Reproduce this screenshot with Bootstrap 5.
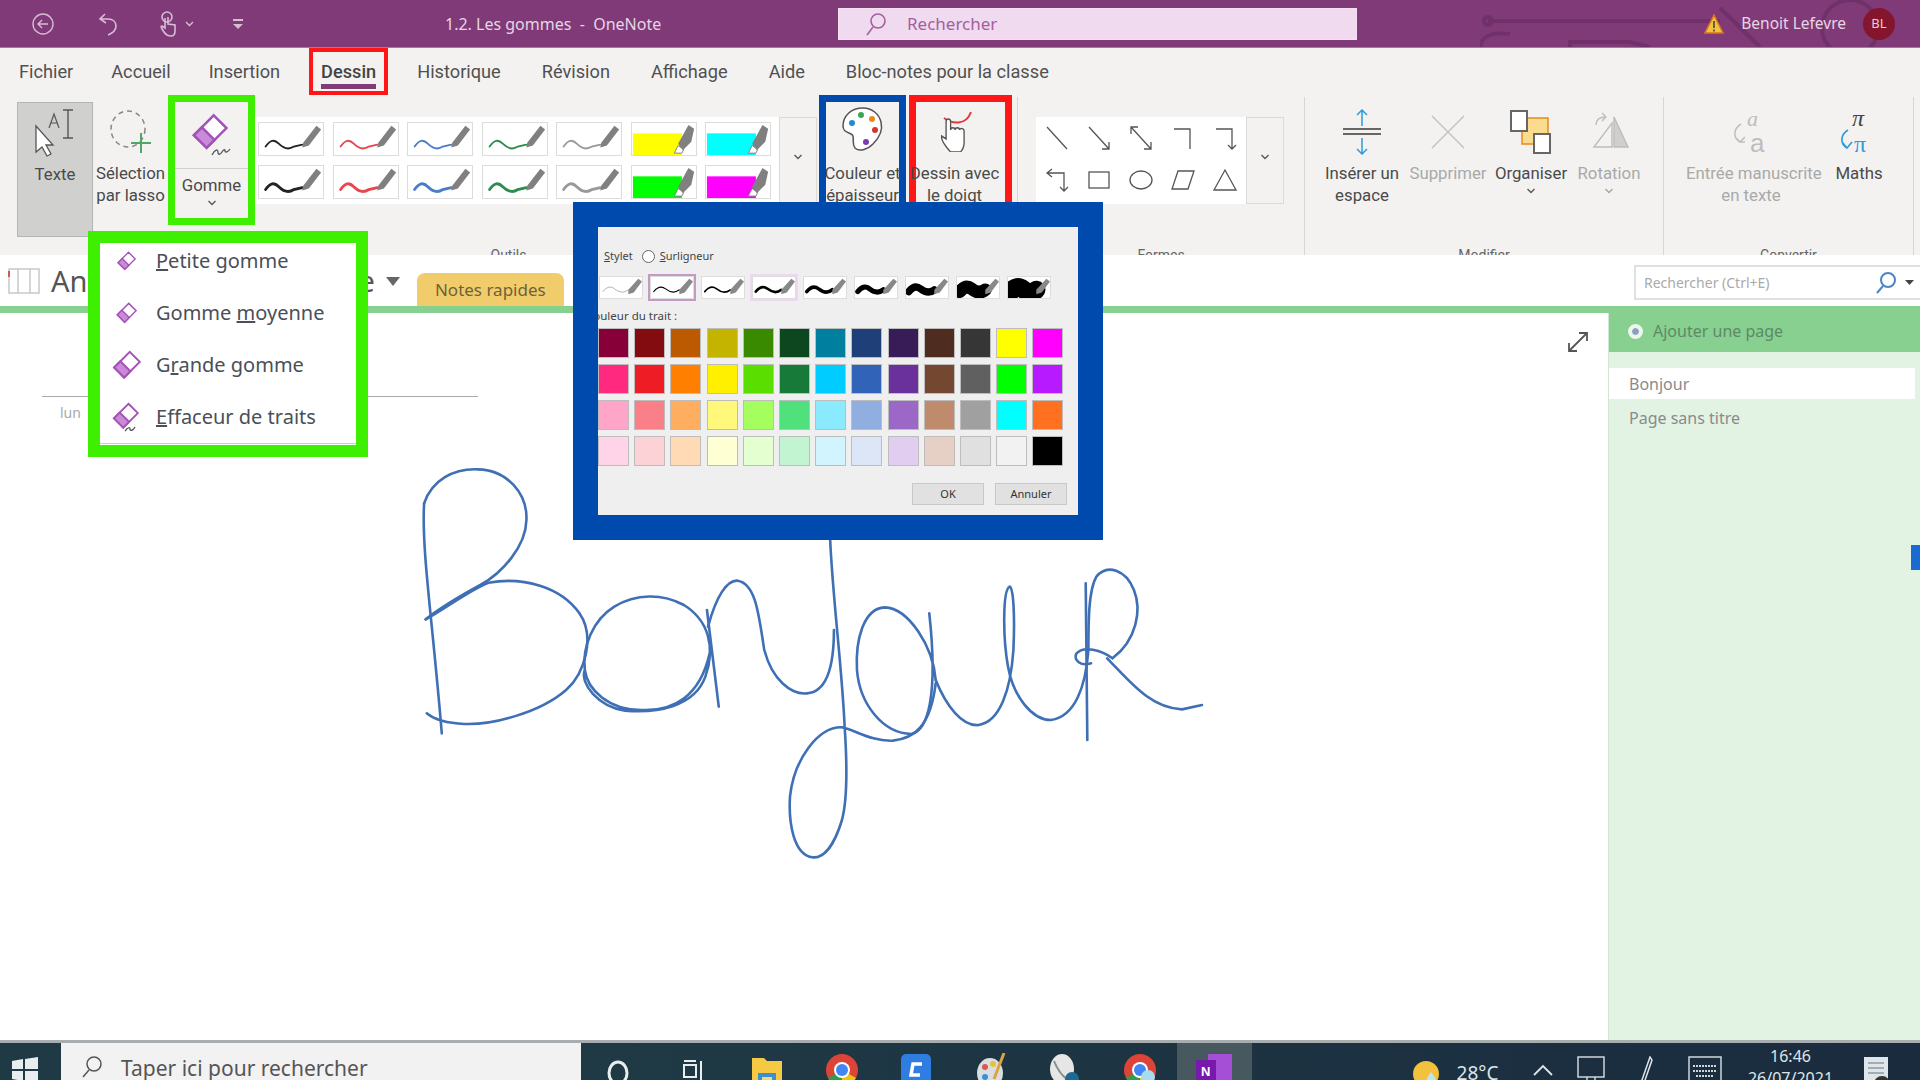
<!DOCTYPE html>
<html lang="fr">
<head>
    <meta charset="UTF-8">
    <title>1.2. Les gommes - OneNote</title>
    <link rel="stylesheet" href="https://cdn.jsdelivr.net/npm/bootstrap@5.3.0/dist/css/bootstrap.min.css">
    <style>
        body { margin: 0; background: #fff; overflow: hidden; font-family: "Noto Sans", "Liberation Sans", sans-serif; color: #444; }
        .ecran { width: 1920px; height: 1080px; position: relative; overflow: hidden; }

        /* barre de titre */
        .titre { height: 48px; background: #803a78; color: #e6d6e4; position: relative; border-bottom: 1px solid #a877a3; }
        .titre-deco { position: absolute; right: 20px; top: 0; }
        .qat { width: 445px; display: grid; grid-template-columns: 31px 24px 42px 22px 40px 39px 80px; align-items: center; }
        .qat-qa { justify-self: center; }
        .titre-texte { width: 393px; font-size: 16px; }
        .recherche-haut { width: 519px; height: 32px; background: #f0daef; border: 1px solid #fff3; color: #a45e9f; font-size: 17px; gap: 20px; padding-left: 26px; position: relative; }
        .user { margin-left: auto; gap: 17px; padding-right: 25px; font-size: 15.5px; position: relative; }
        .avatar { width: 32px; height: 32px; border-radius: 50%; background: #84152c; color: #e8d0d0; font-size: 13px; }

        /* onglets */
        .onglets { height: 47px; background: #f3f2f1; padding-left: 19px; gap: 38px; font-family: Roboto, sans-serif; font-size: 18.2px; color: #505050; }
        .onglet-actif, .onglet-actif ~ span { margin-left: 3px; }
        .onglet-actif { position: relative; font-weight: 500; color: #444; align-self: stretch; display: flex; align-items: center; }
        .onglet-actif::before { content: ""; position: absolute; left: 0; right: 0; bottom: 6px; height: 5px; background: #803a78; }
        .onglet-actif::after { content: ""; position: absolute; left: -12px; right: -12px; top: 0; bottom: 0; border: 4px solid #ff1616; }

        /* ruban */
        .ruban { height: 160px; background: #f3f2f1; overflow: hidden; font-family: Roboto, sans-serif; font-size: 16.8px; color: #4a4a4a; white-space: nowrap; }
        .groupe { flex: none; height: 170px; margin-top: 2px; border-right: 1px solid #d8d6d4; }
        .g-outils { width: 1018px; }
        .g-outils .groupe-corps { padding-left: 17px; }
        .g-formes { width: 287px; }
        .g-formes .groupe-corps { padding-left: 18px; }
        .g-modif { width: 359px; }
        .g-modif .groupe-corps { padding-left: 15px; }
        .g-conv { width: 250px; }
        .g-conv .groupe-corps { padding-left: 22px; }
        .groupe-corps { height: 150px; align-items: flex-start; margin-top: -2px; }
        .groupe-nom { font-size: 14px; text-align: center; line-height: 20px; color: #666; }
        .bt { flex: none; padding-top: 7px; text-align: center; line-height: 22px; }
        .bt-ico { height: 60px; display: flex; align-items: center; justify-content: center; }
        .bt-off { color: #a9a9a9; }
        .bt-texte { width: 76px; height: 135px; margin-top: 7px; padding-top: 0; background: #d0d0ce; border: 1px solid #b5b5b5; }
        .bt-lasso { width: 75px; }
        .w84 { width: 84px; }
        .w88 { width: 88px; }
        .w78 { width: 78px; }
        .w130 { width: 130px; }
        .w86 { width: 86px; }
        .chev { display: block; margin: 4px auto 0; }
        .cadre-vert, .cadre-bleu, .cadre-rouge { height: 130px; border: 7px solid; flex: none; text-align: center; line-height: 22px; }
        .cadre-vert { width: 87px; border-color: #3ef000; }
        .cadre-bleu { width: 87px; border-color: #004aad; margin-left: 2px; }
        .cadre-rouge { width: 103px; border-color: #ff1616; margin-left: 3px; }
        .cadre-bleu, .cadre-rouge { display: flex; flex-direction: column; align-items: center; }
        .doigt-texte { margin-right: 12px; }
        .gomme-ico { height: 67px; border-bottom: 1px solid #d0d0d0; margin: 0 0 5px; display: flex; align-items: center; justify-content: center; }
        .cadre-bleu .bt-ico, .cadre-rouge .bt-ico { height: 53px; margin-bottom: 7px; }
        .galerie { height: 87px; margin-top: 22px; background: #fff; flex: none; }
        .g-plumes { width: 562px; }
        .g-shapes { width: 248px; }
        .galerie-chev { width: 38px; background: #f3f2f1; border: 1px solid #dcdad8; padding-bottom: 8px; }
        .plumes { display: grid; grid-template-columns: repeat(7, 66px); column-gap: 8.5px; row-gap: 8px; padding: 5px 3px; }
        .plume { width: 66px; height: 34px; border: 1px solid #dcdcdc; background: #fff; display: block; }
        .formes { display: grid; grid-template-columns: repeat(5, 42px); grid-auto-rows: 42px; width: 210px; place-items: center; }

        /* barre du bloc-notes */
        .carnet { height: 51px; background: #fff; position: relative; }
        .carnet-nom { font-size: 29px; margin-left: 11px; color: #555; }
        .carnet-suite { font-size: 29px; color: #555; margin-left: 271px; }
        .carnet-fleche { border: 7px solid transparent; border-top: 9px solid #666; margin: 8px 0 0 11px; }
        .sec-rapide { width: 147px; height: 33px; margin-left: 17px; align-self: flex-end; background: #f1cc6b; color: #6e6238; border-radius: 8px 8px 0 0; font-size: 17px; }
        .recherche-bas { position: absolute; left: 1634px; top: 10px; width: 286px; height: 35px; border: 2px solid #e0e0e0; border-right: 0; font-size: 14px; color: #aaa; padding: 0 6px 0 8px; }

        /* contenu */
        .corps { height: 734px; border-top: 7px solid #88d090; }
        .feuille { width: 1608px; position: relative; }
        .ligne-titre { width: 436px; margin: 83px 0 0 42px; border-top: 1px solid #aaa; }
        .ligne-date { margin-left: 60px; padding-top: 5px; font-size: 14px; color: #aaa; }
        .agrandir { position: absolute; left: 1567px; top: 18px; }
        .encre { position: absolute; left: 400px; top: 137px; filter: blur(.4px); }
        .encre path { fill: none; stroke: #3f6fb5; stroke-width: 2.6; stroke-linecap: round; vector-effect: non-scaling-stroke; }
        .pages { width: 312px; background: #e2f3e4; font-size: 16px; color: #8a8a8a; border-left: 1px solid #cfe6d2; }
        .ajout { height: 39px; background: #88d090; color: #5c8a66; gap: 10px; padding: 0 0 3px 19px; margin-bottom: 16px; font-size: 16px; }
        .ajout-rond { width: 15px; height: 15px; border-radius: 50%; background: #eef6ee; border: 4px solid #eef6ee; box-shadow: inset 0 0 0 4px #8aa0c0; }
        .page-on { height: 31px; background: #fff; padding-left: 20px; margin-right: 5px; margin-bottom: 3px; }
        .page-off { height: 31px; padding-left: 20px; }
        .onglet-bleu { position: absolute; right: 0; top: 232px; width: 9px; height: 25px; background: #1a6ad4; }

        /* barre des taches */
        .taches { height: 40px; border-top: 3px solid #a8adb0; background: linear-gradient(90deg, #1f3a45, #1f3a45 30%, #1a2b3e); overflow: hidden; color: #dfe5e8; }
        .demarrer { width: 61px; padding: 13px 0 0 12px; }
        .tache-rech { width: 520px; background: #f2f2f2; color: #555; font-size: 21px; gap: 18px; padding: 12px 0 0 20px; line-height: 26px; white-space: nowrap; }
        .slots { display: grid; grid-template-columns: repeat(9, 74.5px); }
        .slot { height: 60px; padding-top: 10px; text-align: center; }
        .slot-on { background: #47585f; }
        .tray { display: grid; grid-template-columns: 154px 40px 64px 66px 30px 82px 34px 138px 32px; }
        .tray > div { height: 60px; text-align: center; padding-top: 13px; }
        .temp { font-size: 19px; padding-top: 16px !important; }
        .heure { font-size: 16px; line-height: 22px; padding-top: 2px !important; }

        /* menu gomme */
        .menu-gomme { position: absolute; left: 88px; top: 231px; width: 280px; height: 226px; border: 12px solid #3ef000; background: #fff; overflow: hidden; }
        .menu-gomme .list-group { margin-top: -8px; border-bottom: 1px solid #ccc; }
        .menu-gomme .list-group-item { height: 52px; border: 0; padding: 0; display: flex; align-items: center; font-size: 20px; color: #4a4f58; background: transparent; }
        .menu-ico { width: 52px; margin-right: 4px; display: flex; justify-content: center; flex: none; }

        /* dialogue couleur */
        .dialogue { position: absolute; left: 573px; top: 202px; width: 530px; height: 338px; border: 25px solid #004aad; background: #efefef; overflow: hidden; font-size: 11px; color: #444; }
        .d-type { margin: 21px 0 0 6px; height: 16px; gap: 5px; }
        .d-radio { width: 13px; height: 13px; border: 1px solid #666; border-radius: 50%; background: #fff; }
        .d-epais { display: grid; grid-template-columns: repeat(9, 46px); column-gap: 5px; margin-top: 12px; padding-left: 1px; }
        .d-ep { height: 23px; background: #fff; border: 1px solid #ddd; display: block; }
        .d-ep-sel { outline: 2px solid #c49ac4; }
        .d-ep-sel2 { outline: 2px solid #efd8ef; }
        .d-label { margin: 9px 0 0 -12px; height: 16px; line-height: 16px; font-size: 11.5px; white-space: nowrap; }
        .nuancier { display: grid; grid-template-columns: repeat(13, 31px); grid-auto-rows: 30px; column-gap: 5.2px; row-gap: 6px; margin-top: 4px; }
        .nuance { border: 1px solid #bdbdbd; }
        .d-boutons { gap: 11px; margin: 17px 11px 0 0; justify-content: flex-end; }
        .d-bouton { width: 72px; height: 22px; padding: 0; border-radius: 0; font-size: 11px; line-height: 20px; background: #e1e1e1; border: 1px solid #c8c8c8; color: #333; }
    </style>
</head>
<body>

<svg width="0" height="0" class="position-absolute">
    <symbol id="gomme" viewBox="0 0 24 24">
        <polygon points="15,1.5 23,9.5 10.500,22 2.500,14" fill="#fff" stroke="#a552b8" stroke-width="1.6"/>
        <polygon points="2.500,14 7.500,9 15.500,17 10.500,22" fill="#c98bd8" stroke="#a552b8" stroke-width="1.6"/>
    </symbol>
    <symbol id="chevron" viewBox="0 0 10 6">
        <path d="M1.500 1L5 4.500 8.500 1" fill="none" stroke="#555" stroke-width="1.300"/>
    </symbol>
</svg>

<div class="ecran">

    <!-- barre de titre -->
    <div class="titre d-flex align-items-center">
        <svg class="titre-deco" width="420" height="47" viewBox="0 0 420 47" fill="none" stroke="#6f3168" stroke-width="4">
            <path d="M8 21H240M8 21m-4 0a4 4 0 1 0 8 0a4 4 0 1 0-8 0"/>
            <path d="M0 47C2 34 14 32 30 34M90 47V42H150L170 47"/>
            <path d="M240 8L280 47"/>
            <circle cx="370" cy="28" r="28"/>
        </svg>
        <div class="qat position-relative">
            <div></div>
            <svg width="24" height="24" viewBox="0 0 24 24" fill="none" stroke="#d5bdd3" stroke-width="1.4"><circle cx="12" cy="12" r="10"/><path d="M17 12H7M11 8l-4 4 4 4"/></svg>
            <div></div>
            <svg width="22" height="26" viewBox="0 0 22 26" fill="none" stroke="#d5bdd3" stroke-width="1.6"><path d="M8 3L3 8l6 4M3 8h8c5 0 8 3 8 7 0 4-3 7-8 9"/></svg>
            <div></div>
            <div class="d-flex align-items-center gap-2">
                <svg width="18" height="28" viewBox="0 0 18 28" fill="none" stroke="#d5bdd3" stroke-width="1.6"><circle cx="8" cy="7" r="5"/><path d="M6 8v10l-3-2c-2 0 0 3 2 6 2 3 4 4 7 4s4-2 4-5v-6l-7-1V7"/></svg>
                <svg width="9" height="6" viewBox="0 0 9 6" fill="none" stroke="#d5bdd3" stroke-width="1.4"><path d="M1 1l3.500 3.500L8 1"/></svg>
            </div>
            <svg class="qat-qa" width="12" height="12" viewBox="0 0 12 12" fill="#d5bdd3"><rect x="1" y="1" width="10" height="2"/><path d="M1 6h10L6 11z"/></svg>
        </div>
        <div class="titre-texte position-relative">1.2. Les gommes&nbsp; -&nbsp; OneNote</div>
        <div class="recherche-haut d-flex align-items-center">
            <svg width="22" height="24" viewBox="0 0 22 24" fill="none" stroke="#a45e9f" stroke-width="1.6"><circle cx="13" cy="9" r="7"/><path d="M8 15L2 23"/></svg>
            Rechercher
        </div>
        <div class="user d-flex align-items-center">
            <svg width="20" height="20" viewBox="0 0 20 20"><path d="M10 1L19 19H1z" fill="#f2c23c" stroke="#d9731e" stroke-width="1.500"/><path d="M10 7v7M10 15.500v2" stroke="#444" stroke-width="1.600"/></svg>
            <span>Benoit Lefevre</span>
            <div class="avatar d-flex align-items-center justify-content-center">BL</div>
        </div>
    </div>

    <!-- onglets -->
    <div class="onglets d-flex align-items-center">
        <span>Fichier</span><span>Accueil</span><span>Insertion</span>
        <span class="onglet-actif">Dessin</span>
        <span>Historique</span><span>Révision</span><span>Affichage</span><span>Aide</span><span>Bloc-notes pour la classe</span>
    </div>

    <!-- ruban -->
    <div class="ruban d-flex">
        <div class="groupe g-outils">
            <div class="groupe-corps d-flex">
                <div class="bt bt-texte">
                    <div class="bt-ico">
                        <svg width="44" height="50" viewBox="0 0 44 50" fill="none" stroke="#555" stroke-width="1.300">
                            <path d="M3 18v26l6-5 5 9 4-2-5-9h7z" fill="#fff"/>
                            <path d="M16 20l5-14 5 14M18 15h6" stroke-width="1.200"/>
                            <path d="M30 2h10M35 2v28M30 30h10" stroke-width="1.400"/>
                        </svg>
                    </div>
                    Texte
                </div>
                <div class="bt bt-lasso">
                    <div class="bt-ico">
                        <svg width="46" height="46" viewBox="0 0 46 46" fill="none">
                            <ellipse cx="20" cy="20" rx="17" ry="18" stroke="#888" stroke-width="1.500" stroke-dasharray="5 4"/>
                            <path d="M33 24v20M23 34h20" stroke="#4da866" stroke-width="2"/>
                        </svg>
                    </div>
                    Sélection<br>par lasso
                </div>
                <div class="cadre-vert">
                    <div class="gomme-ico">
                        <svg width="44" height="44" viewBox="0 0 44 44" fill="none">
                            <use href="#gomme" x="0" y="0" width="38" height="38"/>
                            <path d="M22 42c3-6 6-6 6-3s2 3 4 0 3-3 3-1 3 1 5-2" stroke="#555" stroke-width="1.300"/>
                        </svg>
                    </div>
                    Gomme
                    <svg class="chev" width="10" height="6"><use href="#chevron"/></svg>
                </div>
                <div class="galerie g-plumes d-flex">
                    <div class="plumes flex-fill" id="plumes"></div>
                    <div class="galerie-chev d-flex align-items-center justify-content-center"><svg width="10" height="6"><use href="#chevron"/></svg></div>
                </div>
                <div class="cadre-bleu">
                    <div class="bt-ico">
                        <svg width="44" height="46" viewBox="0 0 44 46" fill="none">
                            <path d="M22 2C10 2 2 10 2 20c0 8 9 6 10 10 1 5-1 8 2 12 4 4 12 2 18-4 6-6 10-14 8-22C38 8 31 2 22 2z" fill="#fff" stroke="#555" stroke-width="1.500"/>
                            <circle cx="11" cy="17" r="3" fill="#1f8bd0"/><circle cx="20" cy="9" r="3" fill="#3aa655"/>
                            <circle cx="31" cy="13" r="3" fill="#e88a1a"/><circle cx="34" cy="24" r="3" fill="#d9342b"/>
                            <circle cx="25" cy="36" r="3" fill="#7a3bb0"/>
                        </svg>
                    </div>
                    <div>Couleur et<br>épaisseur</div>
                </div>
                <div class="cadre-rouge">
                    <div class="bt-ico">
                        <svg width="40" height="46" viewBox="0 0 40 46" fill="none">
                            <path d="M3 12c8 6 22 8 27-6" stroke="#e0393e" stroke-width="2"/>
                            <path transform="translate(-3 0) scale(.9 1)" d="M14 46C8 40 3 34 4 30l5 3V16c0-4 5-4 5 0v8c0-3 5-3 5 0 0-3 5-3 5 0 0-2 5-2 5 1v12c0 4-2 7-4 9z" fill="#fff" stroke="#555" stroke-width="1.500"/>
                        </svg>
                    </div>
                    <div class="doigt-texte">Dessin avec<br>le doigt</div>
                </div>
            </div>
            <div class="groupe-nom">Outils</div>
        </div>

        <div class="groupe g-formes">
            <div class="groupe-corps d-flex">
                <div class="galerie g-shapes d-flex">
                    <div class="formes flex-fill">
                        <svg width="26" height="26" viewBox="0 0 26 26" fill="none" stroke="#555" stroke-width="1.300"><path d="M3 2l20 22"/></svg>
                        <svg width="26" height="26" viewBox="0 0 26 26" fill="none" stroke="#555" stroke-width="1.300"><path d="M3 2l20 22M23 17v7h-7"/></svg>
                        <svg width="26" height="26" viewBox="0 0 26 26" fill="none" stroke="#555" stroke-width="1.300"><path d="M3 2l20 22M23 17v7h-7M3 9V2h7"/></svg>
                        <svg width="26" height="26" viewBox="0 0 26 26" fill="none" stroke="#555" stroke-width="1.300"><path d="M4 4h16v20"/></svg>
                        <svg width="26" height="26" viewBox="0 0 26 26" fill="none" stroke="#555" stroke-width="1.300"><path d="M4 4h16v20M16 20l4 4 4-4"/></svg>
                        <svg width="26" height="26" viewBox="0 0 26 26" fill="none" stroke="#555" stroke-width="1.300"><path d="M8 2L3 6l5 4M3 6h17v18M16 20l4 4 4-4"/></svg>
                        <svg width="26" height="26" viewBox="0 0 26 26" fill="none" stroke="#555" stroke-width="1.300"><rect x="3" y="5" width="20" height="16"/></svg>
                        <svg width="26" height="26" viewBox="0 0 26 26" fill="none" stroke="#555" stroke-width="1.300"><ellipse cx="13" cy="13" rx="11" ry="9"/></svg>
                        <svg width="26" height="26" viewBox="0 0 26 26" fill="none" stroke="#555" stroke-width="1.300"><path d="M8 4h16l-6 18H2z"/></svg>
                        <svg width="26" height="26" viewBox="0 0 26 26" fill="none" stroke="#555" stroke-width="1.300"><path d="M13 3l11 20H2z"/></svg>
                    </div>
                    <div class="galerie-chev d-flex align-items-center justify-content-center"><svg width="10" height="6"><use href="#chevron"/></svg></div>
                </div>
            </div>
            <div class="groupe-nom">Formes</div>
        </div>

        <div class="groupe g-modif">
            <div class="groupe-corps d-flex">
                <div class="bt w84">
                    <div class="bt-ico">
                        <svg width="42" height="46" viewBox="0 0 42 46" fill="none">
                            <path d="M21 1v16M16 6l5-5 5 5M21 45V29M16 40l5 5 5-5" stroke="#2f9bd8" stroke-width="1.500"/>
                            <path d="M2 20h38M2 25h38" stroke="#666" stroke-width="2"/>
                        </svg>
                    </div>
                    Insérer un<br>espace
                </div>
                <div class="bt w88 bt-off">
                    <div class="bt-ico">
                        <svg width="36" height="36" viewBox="0 0 36 36" fill="none" stroke="#c4c4c4" stroke-width="1.500"><path d="M2 2l32 32M34 2L2 34"/></svg>
                    </div>
                    Supprimer
                </div>
                <div class="bt w78">
                    <div class="bt-ico">
                        <svg width="42" height="44" viewBox="0 0 42 44">
                            <rect x="12" y="8" width="26" height="26" fill="#fbdc8e" stroke="#e58a20" stroke-width="1.500"/>
                            <rect x="1" y="1" width="16" height="20" fill="#fff" stroke="#666" stroke-width="2"/>
                            <rect x="24" y="24" width="16" height="19" fill="#fff" stroke="#666" stroke-width="2"/>
                        </svg>
                    </div>
                    Organiser
                    <svg class="chev" width="10" height="6"><use href="#chevron"/></svg>
                </div>
                <div class="bt w78 bt-off">
                    <div class="bt-ico">
                        <svg width="42" height="42" viewBox="0 0 42 42" fill="none" stroke="#bdbdbd" stroke-width="1.400">
                            <path d="M6 36L24 12v24z"/><path d="M26 6l14 30H26z" fill="#cfcfcf"/><path d="M8 14C8 8 12 6 18 6M14 2l4 4-4 4"/>
                        </svg>
                    </div>
                    Rotation
                    <svg class="chev opacity-50" width="10" height="6"><use href="#chevron"/></svg>
                </div>
            </div>
            <div class="groupe-nom">Modifier</div>
        </div>

        <div class="groupe g-conv">
            <div class="groupe-corps d-flex">
                <div class="bt w130 bt-off">
                    <div class="bt-ico">
                        <svg width="42" height="48" viewBox="0 0 42 48" fill="none" stroke="#bdbdbd" stroke-width="1.500">
                            <text x="17" y="18" font-size="22" font-style="italic" font-family="Liberation Serif, serif" fill="#bdbdbd" stroke="none">a</text>
                            <path d="M11 16C3 21 3 30 10 34M5 29l5 5 5-5M10 34h5"/>
                            <text x="20" y="44" font-size="26" font-family="Liberation Sans, sans-serif" fill="#bdbdbd" stroke="none">a</text>
                        </svg>
                    </div>
                    Entrée manuscrite<br>en texte
                </div>
                <div class="bt w86">
                    <div class="bt-ico">
                        <svg width="44" height="52" viewBox="0 0 44 52" fill="none">
                            <text x="15" y="20" font-size="24" font-style="italic" font-family="Liberation Serif, serif" fill="#444">π</text>
                            <path d="M11 24C3 29 3 38 10 42M5 36l5 6 5-6" stroke="#2f9bd8" stroke-width="1.700"/>
                            <text x="17" y="46" font-size="24" font-family="Liberation Serif, serif" fill="#2f9bd8">π</text>
                        </svg>
                    </div>
                    Maths
                </div>
            </div>
            <div class="groupe-nom">Convertir</div>
        </div>
    </div>

    <!-- barre du bloc-notes -->
    <div class="carnet d-flex align-items-center">
        <svg class="ms-2" width="32" height="28" viewBox="0 0 32 28" fill="none" stroke="#c8c8c8" stroke-width="1.500"><rect x="1" y="2" width="30" height="24"/><path d="M10 2v24M22 2v24"/><path d="M1 4v6" stroke="#c0392b"/></svg>
        <span class="carnet-nom">An</span>
        <span class="carnet-suite">e</span>
        <span class="carnet-fleche"></span>
        <div class="sec-rapide d-flex align-items-center justify-content-center">Notes rapides</div>
        <div class="recherche-bas d-flex align-items-center justify-content-between">
            <span>Rechercher (Ctrl+E)</span>
            <span class="d-flex align-items-center gap-2">
                <svg width="22" height="24" viewBox="0 0 22 24" fill="none" stroke="#4a86c5" stroke-width="2"><circle cx="13" cy="9" r="7"/><path d="M8 15L2 22"/></svg>
                <svg width="9" height="5" viewBox="0 0 9 5"><path d="M0 0h9L4.500 5z" fill="#444"/></svg>
            </span>
        </div>
    </div>

    <!-- contenu -->
    <div class="corps d-flex">
        <div class="feuille">
            <div class="ligne-titre"></div>
            <div class="ligne-date">lun</div>
            <svg class="agrandir" width="22" height="22" viewBox="0 0 22 22" fill="none" stroke="#555" stroke-width="1.800"><path d="M2 20L20 2M12 2h8v8M2 12v8h8"/></svg>
            <svg class="encre" width="840" height="430" viewBox="0 0 1568 1290" preserveAspectRatio="none">
                <path d="M45 160C40 300 60 500 78 850"/>
                <path d="M45 160C60 90 100 55 145 58C200 60 238 130 236 210C235 290 190 370 150 405C110 440 70 480 48 508"/>
                <path d="M48 508C90 470 130 420 165 398C230 380 300 410 335 490C365 560 345 670 310 720C260 790 170 825 120 822C90 820 65 810 50 790"/>
                <path d="M345 660C335 700 370 770 420 782C480 790 550 770 570 680C590 590 575 510 530 465C490 430 440 430 400 470C360 510 340 590 345 660C350 720 390 780 450 780C510 785 560 740 578 610"/>
                <path d="M573 480L595 770"/>
                <path d="M575 530C590 440 610 390 630 392C665 400 670 500 680 600C695 690 730 735 760 730C800 725 810 640 810 540"/>
                <path d="M803 270C808 450 825 650 830 830C835 950 835 1050 825 1110C810 1190 790 1225 770 1222C735 1215 725 1120 728 1040C735 930 780 830 825 832C850 840 880 875 920 872C960 865 990 830 1000 700"/>
                <path d="M1000 690C995 590 950 475 905 472C865 475 850 570 853 660C858 760 900 850 955 852C985 840 1005 740 988 490"/>
                <path d="M1000 690C1020 770 1050 830 1080 825C1120 815 1140 720 1145 600C1148 500 1145 410 1138 410C1125 420 1125 560 1135 650C1145 740 1180 810 1215 810C1260 800 1280 710 1285 600"/>
                <path d="M1280 400L1283 870"/>
                <path d="M1290 640C1270 650 1258 630 1262 612C1275 585 1310 600 1330 625C1375 570 1385 480 1370 420C1355 360 1320 340 1300 380C1285 420 1285 520 1285 600"/>
                <path d="M1320 625C1360 690 1400 775 1460 778L1497 765"/>
            </svg>
        </div>
        <div class="pages position-relative">
            <div class="ajout d-flex align-items-center"><span class="ajout-rond"></span>Ajouter une page</div>
            <div class="page-on d-flex align-items-center">Bonjour</div>
            <div class="page-off d-flex align-items-center">Page sans titre</div>
            <div class="onglet-bleu"></div>
        </div>
    </div>

    <!-- barre des taches -->
    <div class="taches d-flex">
        <div class="demarrer">
            <svg width="26" height="26" viewBox="0 0 26 26" fill="#e8eef0"><path d="M0 4l11-2v10H0zM13 2l13-2v12H13zM0 14h11v10L0 22zM13 14h13v12l-13-2z"/></svg>
        </div>
        <div class="tache-rech d-flex align-items-start">
            <svg width="22" height="24" viewBox="0 0 22 24" fill="none" stroke="#555" stroke-width="1.500"><circle cx="13" cy="9" r="7"/><path d="M8 15L2 22"/></svg>
            Taper ici pour rechercher
        </div>
        <div class="slots">
            <div class="slot"><svg width="24" height="30" viewBox="0 0 24 30" fill="none" stroke="#e8eef0" stroke-width="3"><ellipse cx="12" cy="20" rx="9" ry="11"/></svg></div>
            <div class="slot"><svg width="24" height="30" viewBox="0 0 24 30" fill="none" stroke="#e8eef0" stroke-width="2"><path d="M3 8h12M3 12h12v12H3zM3 28h12M20 8v22"/></svg></div>
            <div class="slot"><svg width="32" height="34" viewBox="0 0 32 34"><path d="M1 5h12l3 3h15v26H1z" fill="#f6c945"/><rect x="7" y="20" width="18" height="14" fill="#3d8fd0"/><rect x="11" y="24" width="10" height="10" fill="#f6d978"/></svg></div>
            <div class="slot"><svg width="34" height="34" viewBox="0 0 34 34"><circle cx="17" cy="17" r="16" fill="#db4437"/><path d="M17 17L3 25a16 16 0 0 0 14 8z" fill="#2d9f4c"/><path d="M17 17l14 8a16 16 0 0 1-14 8z" fill="#f4c20d"/><circle cx="17" cy="17" r="8" fill="#fff"/><circle cx="17" cy="17" r="6" fill="#4285f4"/></svg></div>
            <div class="slot"><svg width="32" height="34" viewBox="0 0 32 34"><rect x="1" y="1" width="30" height="33" rx="5" fill="#2f7de1"/><path d="M22 11h-9l-2 11h9" fill="none" stroke="#fff" stroke-width="3.500"/></svg></div>
            <div class="slot"><svg width="30" height="34" viewBox="0 0 30 34"><ellipse cx="14" cy="20" rx="13" ry="15" fill="#d8dee2"/><circle cx="9" cy="14" r="3" fill="#e0574a"/><circle cx="17" cy="11" r="3" fill="#e8c13a"/><circle cx="9" cy="24" r="3" fill="#3f8fd8"/><path d="M18 26L28 0" stroke="#d9a441" stroke-width="3"/></svg></div>
            <div class="slot"><svg width="34" height="34" viewBox="0 0 34 34"><ellipse cx="14" cy="16" rx="12" ry="15" fill="#e6e6e6"/><path d="M6 8c4 10 8 16 16 20" stroke="#8a8a8a" stroke-width="2" fill="none"/><circle cx="24" cy="26" r="7" fill="#1c6a94"/></svg></div>
            <div class="slot"><svg width="34" height="34" viewBox="0 0 34 34"><circle cx="17" cy="17" r="16" fill="#db4437"/><path d="M17 17L3 25a16 16 0 0 0 14 8z" fill="#2d9f4c"/><path d="M17 17l14 8a16 16 0 0 1-14 8z" fill="#f4c20d"/><circle cx="17" cy="17" r="8" fill="#fff"/><circle cx="17" cy="17" r="6" fill="#4285f4"/><circle cx="25" cy="24" r="7" fill="#a8dcec"/></svg></div>
            <div class="slot slot-on"><svg width="36" height="34" viewBox="0 0 36 34"><rect x="12" y="1" width="24" height="33" fill="#a54fd6"/><rect x="0" y="7" width="20" height="22" fill="#7719aa"/><text x="5" y="23" font-size="13" font-weight="700" fill="#fff" font-family="Liberation Sans, sans-serif">N</text></svg></div>
        </div>
        <div class="tray">
            <div></div>
            <div><svg width="28" height="34" viewBox="0 0 28 34"><circle cx="14" cy="18" r="13" fill="#f2c23c"/><path d="M19 16c-3 4-6 8-3 12 3 3 8 1 8-3 0-3-3-6-5-9z" fill="#bfe3f2"/></svg></div>
            <div class="temp">28°C</div>
            <div><svg width="22" height="14" viewBox="0 0 22 14" fill="none" stroke="#dfe5e8" stroke-width="1.800"><path d="M2 12L11 3l9 9"/></svg></div>
            <div><svg width="28" height="30" viewBox="0 0 28 30" fill="none" stroke="#cfd6da" stroke-width="1.500"><rect x="1" y="1" width="26" height="20"/><path d="M10 21v8h8v-8"/></svg></div>
            <div><svg width="26" height="34" viewBox="0 0 26 34" fill="none" stroke="#dfe5e8" stroke-width="1.500"><path d="M16 1L8 24c-3 2-6 3-6 6 0 2 4 3 7 0l9-26zM6 26c2 0 4 1 4 3"/></svg></div>
            <div><svg width="34" height="28" viewBox="0 0 34 28" fill="none" stroke="#cfd6da" stroke-width="1.500"><rect x="1" y="1" width="32" height="26"/><path d="M5 10h24M5 15h24M8 20h18" stroke-dasharray="2 1" stroke-width="2"/></svg></div>
            <div class="heure">16:46<br>26/07/2021</div>
            <div><svg width="26" height="32" viewBox="0 0 26 32" fill="#dfe5e8"><path d="M1 1h24v24H1z"/><path d="M5 7h16M5 12h16M5 17h16" stroke="#8b9aa2" stroke-width="1.500"/><circle cx="19" cy="28" r="8" fill="#333"/></svg></div>
        </div>
    </div>

    <!-- menu de la gomme -->
    <div class="menu-gomme">
        <div class="list-group list-group-flush">
            <div class="list-group-item"><span class="menu-ico"><svg width="20" height="20"><use href="#gomme"/></svg></span><span><u>P</u>etite gomme</span></div>
            <div class="list-group-item"><span class="menu-ico"><svg width="22" height="22"><use href="#gomme"/></svg></span><span>Gomme <u>m</u>oyenne</span></div>
            <div class="list-group-item"><span class="menu-ico"><svg width="30" height="30"><use href="#gomme"/></svg></span><span>G<u>r</u>ande gomme</span></div>
            <div class="list-group-item"><span class="menu-ico"><svg width="30" height="30" viewBox="0 0 30 30" fill="none"><use href="#gomme" width="28" height="28"/><path d="M14 29c3-4 5-4 5-2s3 2 5-2" stroke="#555" stroke-width="1.300"/></svg></span><span><u>E</u>ffaceur de traits</span></div>
        </div>
    </div>

    <!-- dialogue couleur et epaisseur -->
    <div class="dialogue">
        <div class="d-type d-flex align-items-center">
            <span><u>S</u>tylet</span>
            <span class="d-radio ms-1"></span>
            <span><u>S</u>urligneur</span>
        </div>
        <div class="d-epais" id="epaisseurs"></div>
        <div class="d-label">Couleur du trait :</div>
        <div class="nuancier" id="nuancier"></div>
        <div class="d-boutons d-flex">
            <button class="btn d-bouton">OK</button>
            <button class="btn d-bouton">Annuler</button>
        </div>
    </div>
</div>

<script src="https://cdn.jsdelivr.net/npm/bootstrap@5.3.0/dist/js/bootstrap.bundle.min.js"></script>
<script>
    const stylo = `<path d="M46 21L60 3l5 4-13 17-7 2z" fill="#808080"/>`

    function plume(couleur, largeur) {
        return `<svg class="plume" viewBox="0 0 66 34">
            <path d="M6 25c5-7 9-8 14-3 5 5 10 7 16 3l9-2" fill="none" stroke="${couleur}" stroke-width="${largeur}" stroke-linecap="round"/>${stylo}</svg>`
    }

    function surligneur(couleur) {
        return `<svg class="plume" viewBox="0 0 66 34">
            <rect x="0" y="11" width="52" height="23" fill="${couleur}"/>
            <path d="M44 32l4-8 6 4-2 4z" fill="#fff" stroke="#808080"/>
            <path d="M48 22L59 2l6 4-3 14-9 9z" fill="#808080"/></svg>`
    }

    let couleursPlumes = ["#222", "#e8464c", "#4a7cc8", "#2e8b50", "#999"]
    let htmlPlumes = ""
    couleursPlumes.forEach(c => htmlPlumes += plume(c, 2))
    htmlPlumes += surligneur("#ffff00") + surligneur("#00ffff")
    couleursPlumes.forEach(c => htmlPlumes += plume(c, 3))
    htmlPlumes += surligneur("#00ff00") + surligneur("#ff00ff")
    document.querySelector("#plumes").innerHTML = htmlPlumes

    let largeurs = [0.6, 1.200, 1.800, 2.800, 4, 5.500, 8, 14, 20]
    document.querySelector("#epaisseurs").innerHTML = largeurs.map((l, i) => {
        let sel = i == 1 ? "d-ep-sel" : i == 3 ? "d-ep-sel2" : ""
        return `<svg class="d-ep ${sel}" viewBox="0 0 46 23">
            <path d="M3 16c5-6 9-6 13-3 5 4 10 5 15 1" fill="none" stroke="${i == 0 ? "#777" : "#000"}" stroke-width="${l}" stroke-linecap="round"/>
            <path d="M31 14L42 2l4 3-9 12-6 2z" fill="#888"/></svg>`
    }).join("")

    let nuances = [
        "#880038","#820c10","#bb5a00","#c4b400","#3a8a00","#0d4720","#007f9e","#1f3f78","#381c58","#4e2d20","#363636","#ffff00","#ff00ff",
        "#ff2a80","#ee1c25","#ff7f00","#fff000","#5ade00","#177a38","#00ccff","#3163b8","#6a309c","#744830","#606060","#00ff00","#b81aff",
        "#ffa6c8","#f98088","#ffae60","#fff87a","#a4ff5e","#50e07c","#8ceaff","#90aee0","#9b68c8","#c08a6c","#a0a0a0","#00ffff","#ff7020",
        "#ffd4e8","#fcd2d6","#ffdab4","#ffffd4","#e4ffd0","#c2f4d2","#d2f4ff","#dce6f6","#e0cdf0","#e6cfc4","#e0e0e0","#f2f2f2","#000000"
    ]
    document.querySelector("#nuancier").innerHTML = nuances.map(c => `<div class="nuance" style="background:${c}"></div>`).join("")
</script>
</body>
</html>
